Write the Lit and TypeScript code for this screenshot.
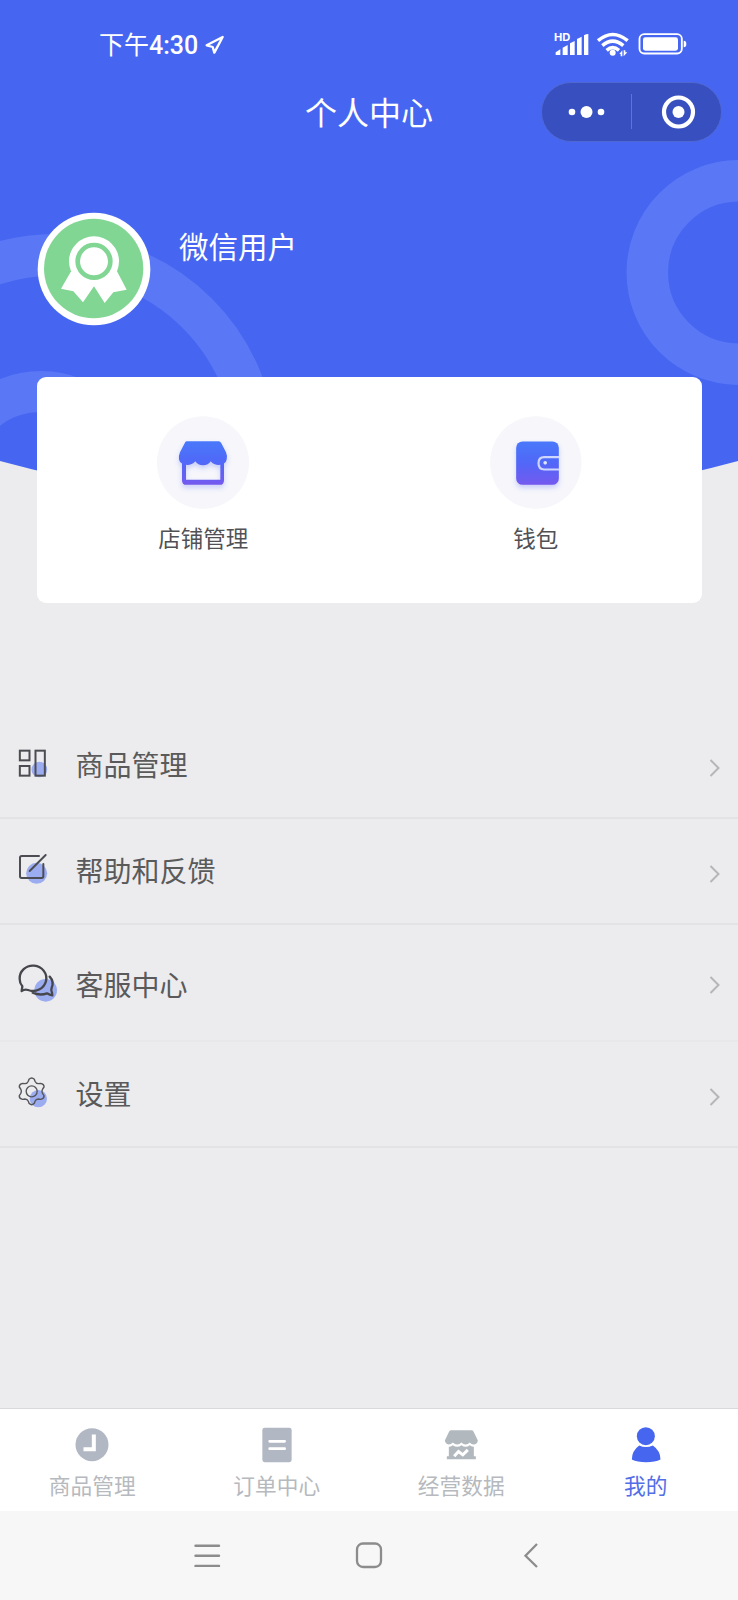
import { LitElement, html, css } from "lit";
import { customElement, property } from "lit/decorators.js";

const shopIcon = html`<svg width="92" height="94" viewBox="51 47.500 276 282">
  <defs>
    <linearGradient id="g" x1="0" y1="0" x2="0" y2="1"><stop offset="0" stop-color="#4a78fa"/><stop offset=".5" stop-color="#5167f8"/><stop offset="1" stop-color="#7459ee"/></linearGradient>
    <filter id="s" x="-30%" y="-30%" width="160%" height="180%"><feDropShadow dx="0" dy="9" stdDeviation="8" flood-color="#5566f0" flood-opacity=".28"/></filter>
  </defs>
  <ellipse cx="189" cy="187" rx="138" ry="139" fill="#f6f6fb"/>
  <path filter="url(#s)" fill="url(#g)" fill-rule="evenodd" d="M140 123H236Q241 123 244 129L258 156Q263 168 260 178Q258 187 252 190V240Q252 254 239 254H139Q126 254 126 240V190Q119 187 117 178Q115 168 120 156L134 129Q136 123 140 123ZM138 194V239H241V194Q223 196 212 183Q205 195 189 195Q174 195 166 183Q154 196 138 194Z"/>
</svg>`;

const walletIcon = html`<svg width="92" height="94" viewBox="1049.500 47.500 276 282">
  <defs>
    <linearGradient id="g" x1="0" y1="0" x2="0" y2="1"><stop offset="0" stop-color="#4c78fb"/><stop offset=".5" stop-color="#5b68f9"/><stop offset="1" stop-color="#7455f7"/></linearGradient>
    <filter id="s" x="-30%" y="-30%" width="160%" height="180%"><feDropShadow dx="0" dy="9" stdDeviation="8" flood-color="#5566f0" flood-opacity=".28"/></filter>
  </defs>
  <ellipse cx="1187" cy="187" rx="137" ry="139" fill="#f6f6fb"/>
  <rect filter="url(#s)" x="1128" y="124" width="128" height="130" rx="19" fill="url(#g)"/>
  <path d="M1257 171H1212Q1195 171 1195 189.500T1212 208H1257" fill="none" stroke="#cfd6fd" stroke-width="6.500"/>
  <circle cx="1215" cy="188" r="5.500" fill="#dfe4ff"/>
</svg>`;

const gridIcon = html`<svg width="42" height="42" viewBox="51 51.500 126 126">
  <circle cx="118" cy="119" r="23.500" fill="#9cacf0"/>
  <g fill="none" stroke="#4c4d52" stroke-width="6"><rect x="59.500" y="62.500" width="29" height="29"/><rect x="59.500" y="108.500" width="29" height="29"/><rect x="106.500" y="62.500" width="28" height="75"/></g>
</svg>`;

const editIcon = html`<svg width="42" height="42" viewBox="51 369 126 126">
  <circle cx="110" cy="430" r="31.500" fill="#9cacf0"/>
  <path d="M117 378H65Q60 378 60 383V439Q60 444 65 444H125Q130 444 130 439V402M137 375L89 423" fill="none" stroke="#4c4d52" stroke-width="6" stroke-linecap="round"/>
</svg>`;

const chatIcon = html`<svg width="42" height="42" viewBox="51 94 126 126">
  <circle cx="137" cy="179" r="34" fill="#9cacf0"/>
  <path d="M65 181L67 167Q59 158 59 145A40 38 0 1 1 84 178Q74 175 65 181ZM149 138Q163 153 155 171Q152 178 156 186L157 194Q149 193 141 188Q120 196 98 186" fill="none" stroke="#46474c" stroke-width="7" stroke-linejoin="round" stroke-linecap="round"/>
</svg>`;

const gearIcon = html`<svg width="42" height="42" viewBox="51 437 126 126">
  <circle cx="115" cy="505" r="26" fill="#9cacf0"/>
  <g fill="none" stroke="#55565b" stroke-width="4.200" stroke-linejoin="round">
    <path d="M87 447Q95 439 103 447L105 453Q108 460 115 460L122 459Q133 461 132 470L128 476Q124 483 128 490L132 496Q133 505 122 507L115 506Q108 506 105 513L103 519Q95 527 87 519L85 513Q82 506 75 506L68 507Q57 505 58 496L62 490Q66 483 62 476L58 470Q57 461 68 459L75 460Q82 460 85 453Z"/>
    <circle cx="95" cy="483" r="16.500"/>
  </g>
</svg>`;

const clockTab = html`<svg width="42" height="38" viewBox="214.500 107.500 126 114">
  <circle cx="277.500" cy="163.500" r="49.500" fill="#b2b8c3"/><path d="M283 133V177H252" fill="none" stroke="#fff" stroke-width="12"/>
</svg>`;
const orderTab = html`<svg width="42" height="38" viewBox="768 107.500 126 114">
  <rect x="787" y="113" width="88" height="103" rx="7" fill="#b2b8c3"/><path d="M809 153.500H854M809 175.500H854" stroke="#fff" stroke-width="8" stroke-linecap="round"/>
</svg>`;
const dataTab = html`<svg width="42" height="38" viewBox="216.500 107.500 126 114">
  <path fill="#b1b8be" d="M250 120H311Q315 120 317 124L330 151Q329 161 319 163Q311 164 306 157Q300 163 293 163Q286 163 281 157Q275 163 268 163Q261 163 255 157Q250 163 242 163Q233 162 231 151L244 124Q246 120 250 120Z"/>
  <path fill="#b1b8be" d="M243 170Q249 170 255 165Q261 170 268 170Q275 170 281 165Q287 170 293 170Q300 170 306 165Q312 170 318 170V198H324V207H237V198H243Z"/>
  <path d="M259 198L272 184L285 194L300 179" fill="none" stroke="#fff" stroke-width="9"/>
</svg>`;
const mineTab = html`<svg width="42" height="38" viewBox="771.500 107.500 126 114">
  <circle cx="834" cy="138" r="27" fill="#4666f0"/>
  <path fill="#4666f0" d="M814 166Q834 175 855 166Q878 182 878 208Q862 216 835 216T792 208Q792 182 814 166Z"/>
</svg>`;

@customElement("menu-row")
export class MenuRow extends LitElement {
  @property() label = "";
  @property({ attribute: false }) icon: unknown;

  static styles = css`
    :host { display: flex; align-items: center; box-sizing: border-box; height: 106px; padding: 0 15px 0 17px; border-bottom: 2px solid #e3e3e5; }
    svg { display: block; flex: none; }
    .icon { display: flex; margin-top: 5px; }
    .label { flex: 1; margin-left: 16.5px; font-size: 28px; line-height: 40px; color: #5a5a5b; margin-top: 4px; }
    .arrow { margin-top: 5px; }
    :host(.tall) { height: 117px; border-bottom-color: #e8e8ea; }
    :host(.tall) .icon { margin-top: 0; }
    :host(.tall) .label { margin-top: 9px; }
  `;

  render() {
    return html`
      <span class="icon">${this.icon}</span>
      <span class="label">${this.label}</span>
      <svg class="arrow" width="16" height="20" viewBox="0 0 16 20"><path d="M3.500 2L11.500 10L3.500 18" fill="none" stroke="#b6b6b8" stroke-width="2"/></svg>
    `;
  }
}

@customElement("app-root")
export class AppRoot extends LitElement {
  static styles = css`
    :host { display: flex; flex-direction: column; position: relative; width: 738px; height: 1600px; overflow: hidden; background: #ececee; font-family: Roboto, "Noto Sans CJK SC", sans-serif; font-weight: 400; }
    svg { display: block; flex: none; }
    .backdrop { position: absolute; left: 0; top: 0; }
    .status, .titlebar, .profile, .card { position: relative; }
    .status { display: flex; justify-content: space-between; align-items: center; height: 58px; padding: 30px 50px 0 99px; box-sizing: border-box; color: #fff; font-size: 25px; }
    .time { display: flex; align-items: center; line-height: 28px; padding-top: 4px; }
    .digits { font-weight: 500; }
    .place { margin: -2px 0 0 7px; }
    .titlebar { display: grid; grid-template-columns: 1fr auto 1fr; align-items: center; height: 60px; margin-top: 24px; padding-right: 16px; padding-left: 16px; color: #fff; }
    .title { grid-column: 2; font-size: 32px; line-height: 44px; padding-top: 3px; }
    .capsule { grid-column: 3; justify-self: end; }
    .profile { display: flex; height: 114px; margin: 70px 0 0 37px; }
    .name { margin: 15px 0 0 28px; font-size: 29.500px; line-height: 42px; color: #fff; }
    .card { display: grid; grid-template-columns: 1fr 1fr; box-sizing: border-box; height: 226px; margin: 51px 36px 0 37px; padding-top: 39px; background: #fff; border-radius: 9px; }
    .tile { display: flex; flex-direction: column; align-items: center; gap: 13px; font-size: 22.500px; line-height: 32px; color: #515155; }
    .menu { display: flex; flex-direction: column; margin-top: 110px; }
    .tabs { display: grid; grid-template-columns: repeat(4, 1fr); box-sizing: border-box; height: 103px; margin-top: auto; padding-top: 17px; border-top: 1px solid #d9d9dc; background: #fff; }
    .tab { display: flex; flex-direction: column; align-items: center; gap: 8px; font-size: 21.700px; line-height: 30px; color: #b6b9bd; }
    .tab.active { color: #536ee6; }
    .nav { display: flex; justify-content: space-between; box-sizing: border-box; height: 89px; padding: 28px 186px 0; background: #f7f7f7; }
  `;

  render() {
    return html`
      <svg class="backdrop" width="738" height="520" viewBox="0 0 738 520">
        <defs><clipPath id="hero"><path d="M0 0H738V461Q369 561 0 461Z"/></clipPath></defs>
        <g clip-path="url(#hero)">
          <rect width="738" height="520" fill="#4666f2"/>
          <g fill="none" stroke="#5a78f5">
            <circle cx="739" cy="272.500" r="91.700" stroke-width="41.500"/>
            <circle cx="55.700" cy="455" r="200.300" stroke-width="41.500"/>
            <circle cx="41" cy="480" r="88.500" stroke-width="41"/>
          </g>
        </g>
      </svg>

      <div class="status">
        <div class="time">
          <span>下午</span><span class="digits">4:30</span>
          <svg class="place" width="19" height="20" viewBox="617 103 57 60"><path d="M670 109L622 134L640 139L645 156Z" fill="none" stroke="#fff" stroke-width="7" stroke-linejoin="round"/></svg>
        </div>
        <svg width="135" height="28" viewBox="553 89 405 84">
          <text x="556" y="123" font-family="Inter, Roboto" font-weight="700" font-size="32" textLength="49" lengthAdjust="spacingAndGlyphs" fill="#fff">HD</text>
          <g fill="#fff">
            <path d="M561 164V156L575 147V164ZM582 164V142L597 134V164ZM604 164V129L618 122V164ZM625 164V116L639 109V164ZM646 164V105Q652 101 659 101V164Z"/>
            <circle cx="732" cy="157" r="9"/>
            <path d="M752 161L761 150V168H756V161ZM765 150V168L776 156H770V150Z"/>
          </g>
          <g fill="none" stroke="#fff" stroke-width="10.500"><path d="M688 121Q732 84 777 121M701 136Q732 109 764 136M714 150Q732 134 751 150"/></g>
          <rect x="812.500" y="101.500" width="127" height="58" rx="14" fill="none" stroke="#fff" stroke-width="5.500"/>
          <rect x="823" y="111" width="105" height="40" rx="7" fill="#fff"/>
          <path d="M945 121Q953 121 953 131T945 141Z" fill="#fff"/>
        </svg>
      </div>

      <div class="titlebar">
        <div class="title">个人中心</div>
        <svg class="capsule" width="181" height="60" viewBox="0 0 181 60">
          <rect x=".5" y=".5" width="180" height="59" rx="29.500" fill="#3850bf" stroke="#5067d0"/>
          <path d="M90.500 12V47" stroke="#6075d3"/>
          <g fill="#fff"><circle cx="31" cy="30" r="3.300"/><circle cx="45.500" cy="30" r="6"/><circle cx="60" cy="30" r="3.300"/><circle cx="137.500" cy="30" r="6"/></g>
          <circle cx="137.500" cy="30" r="14.500" fill="none" stroke="#fff" stroke-width="4.200"/>
        </svg>
      </div>

      <div class="profile">
        <svg width="114" height="114" viewBox="111 66 342 342">
          <circle cx="282" cy="237" r="169" fill="#fff"/>
          <circle cx="281" cy="235.500" r="149" fill="#82d694"/>
          <path fill="#fff" d="M212 246L183 296L220 304L249 337L282 289L314 339L340 307L380 299L351 244Z"/>
          <circle cx="282" cy="214" r="75" fill="#fff"/>
          <circle cx="282" cy="214" r="49" fill="none" stroke="#82d694" stroke-width="14"/>
        </svg>
        <div class="name">微信用户</div>
      </div>

      <div class="card">
        <div class="tile">${shopIcon}<span>店铺管理</span></div>
        <div class="tile">${walletIcon}<span>钱包</span></div>
      </div>

      <div class="menu">
        <menu-row label="商品管理" .icon=${gridIcon}></menu-row>
        <menu-row label="帮助和反馈" .icon=${editIcon}></menu-row>
        <menu-row class="tall" label="客服中心" .icon=${chatIcon}></menu-row>
        <menu-row label="设置" .icon=${gearIcon}></menu-row>
      </div>

      <div class="tabs">
        <div class="tab">${clockTab}<span>商品管理</span></div>
        <div class="tab">${orderTab}<span>订单中心</span></div>
        <div class="tab">${dataTab}<span>经营数据</span></div>
        <div class="tab active">${mineTab}<span>我的</span></div>
      </div>

      <div class="nav">
        <svg width="42" height="32" viewBox="0 0 42 32"><path d="M9.500 6.700H33M9.500 16.700H33M9.500 26.900H33" stroke="#8c8c8c" stroke-width="2.400" stroke-linecap="round"/></svg>
        <svg width="42" height="32" viewBox="0 0 42 32"><rect x="9" y="4.500" width="24" height="23.500" rx="6" fill="none" stroke="#8c8c8c" stroke-width="2.300"/></svg>
        <svg width="42" height="32" viewBox="0 0 42 32"><path d="M27 5L15.500 16.700L27 28" fill="none" stroke="#8c8c8c" stroke-width="2.300"/></svg>
      </div>
    `;
  }
}
